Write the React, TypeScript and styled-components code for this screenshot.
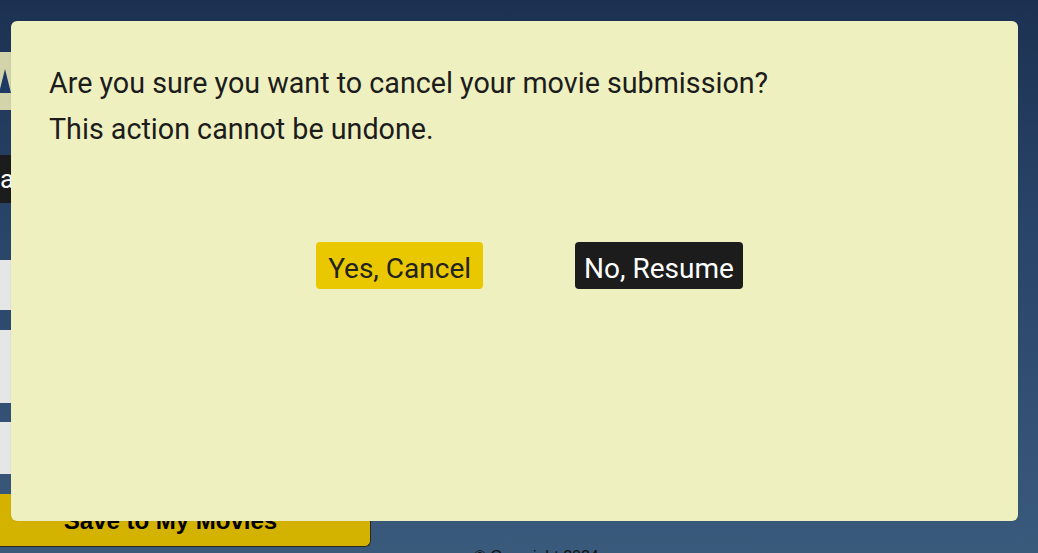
import React from "react";
import styled, { createGlobalStyle } from "styled-components";

const GlobalStyle = createGlobalStyle`
  html, body { margin: 0; padding: 0; }
  body {
    font-family: "Liberation Sans", Arial, sans-serif;
    background: #1d3253;
  }
  #root { height: 553px; overflow: hidden; }
`;

const Page = styled.div`
  position: relative;
  height: 553px;
  overflow: hidden;
  background: linear-gradient(180deg, #1c3152 0%, #284468 40%, #3a5a7c 100%);
`;

const Main = styled.div`
  display: flex;
  flex-direction: column;
  width: 371px;
  padding-top: 52px;
`;

const TitleBar = styled.div`
  height: 58px;
  background: #d4d4aa;
  display: flex;
  align-items: center;
`;

const Arrow = styled.div`
  width: 0;
  height: 0;
  margin-left: -1px;
  border-left: 6px solid transparent;
  border-right: 6px solid transparent;
  border-bottom: 24px solid #1e3a64;
`;

const DarkField = styled.div`
  margin-top: 45px;
  height: 48px;
  background: #1c1c1c;
  color: #ffffff;
  font-family: Roboto, sans-serif;
  font-size: 26px;
  line-height: 48px;
  overflow: hidden;
  white-space: nowrap;
`;

const InputBox = styled.div<{ $h: number; $gap: number }>`
  margin-top: ${p => p.$gap}px;
  height: ${p => p.$h}px;
  background: #e6e6e6;
`;

const SaveButton = styled.button`
  margin-top: 20px;
  height: 53px;
  width: 372px;
  margin-left: -1px;
  background: #d4b200;
  border: 1px solid #2a2a1a;
  border-top: none;
  border-radius: 0 0 6px 0;
  font-family: "Liberation Sans", Arial, sans-serif;
  font-weight: bold;
  font-size: 24px;
  color: #000;
  padding: 14px 29px 0 0;
  line-height: 26px;
  display: flex;
  justify-content: center;
  align-items: flex-start;
`;

const Footer = styled.footer`
  padding-left: 474px;
  font-family: "Liberation Sans", Arial, sans-serif;
  font-size: 16px;
  line-height: 20px;
  color: #111;
  white-space: nowrap;
`;

const Modal = styled.div`
  position: absolute;
  top: 21px;
  left: 11px;
  width: 1007px;
  height: 500px;
  box-sizing: border-box;
  background: #eff0c0;
  border-radius: 6px;
  padding: 39px 0 0 38px;
  display: flex;
  flex-direction: column;
  box-shadow: 0 0 1px rgba(0, 0, 0, 0.25);
`;

const Message = styled.p`
  margin: 0;
  font-family: Roboto, "Noto Sans", sans-serif;
  font-size: 28.7px;
  line-height: 46px;
  color: #1c1c1c;
`;

const Actions = styled.div`
  margin-top: 90px;
  margin-left: -38px;
  padding-left: 30px;
  display: flex;
  justify-content: center;
  gap: 92px;
`;

const ActionButton = styled.button<{ $variant: "yes" | "no" }>`
  height: 47px;
  box-sizing: border-box;
  padding: 6px ${p => (p.$variant === "yes" ? 12 : 9)}px 0;
  border: none;
  border-radius: 4px;
  font-family: Roboto, "Noto Sans", sans-serif;
  font-size: 28px;
  line-height: 41px;
  cursor: pointer;
  background: ${p => (p.$variant === "yes" ? "#eac800" : "#1c1c1c")};
  color: ${p => (p.$variant === "yes" ? "#222222" : "#ffffff")};
`;

export default function App() {
  return (
    <>
      <GlobalStyle />
      <Page>
        <Main>
          <TitleBar>
            <Arrow />
          </TitleBar>
          <DarkField>a</DarkField>
          <InputBox $gap={57} $h={50} />
          <InputBox $gap={20} $h={73} />
          <InputBox $gap={19} $h={52} />
          <SaveButton>Save to My Movies</SaveButton>
        </Main>
        <Footer>© Copyright 2024</Footer>
        <Modal role="dialog" aria-modal="true">
          <Message>Are you sure you want to cancel your movie submission?</Message>
          <Message>This action cannot be undone.</Message>
          <Actions>
            <ActionButton $variant="yes">Yes, Cancel</ActionButton>
            <ActionButton $variant="no">No, Resume</ActionButton>
          </Actions>
        </Modal>
      </Page>
    </>
  );
}
